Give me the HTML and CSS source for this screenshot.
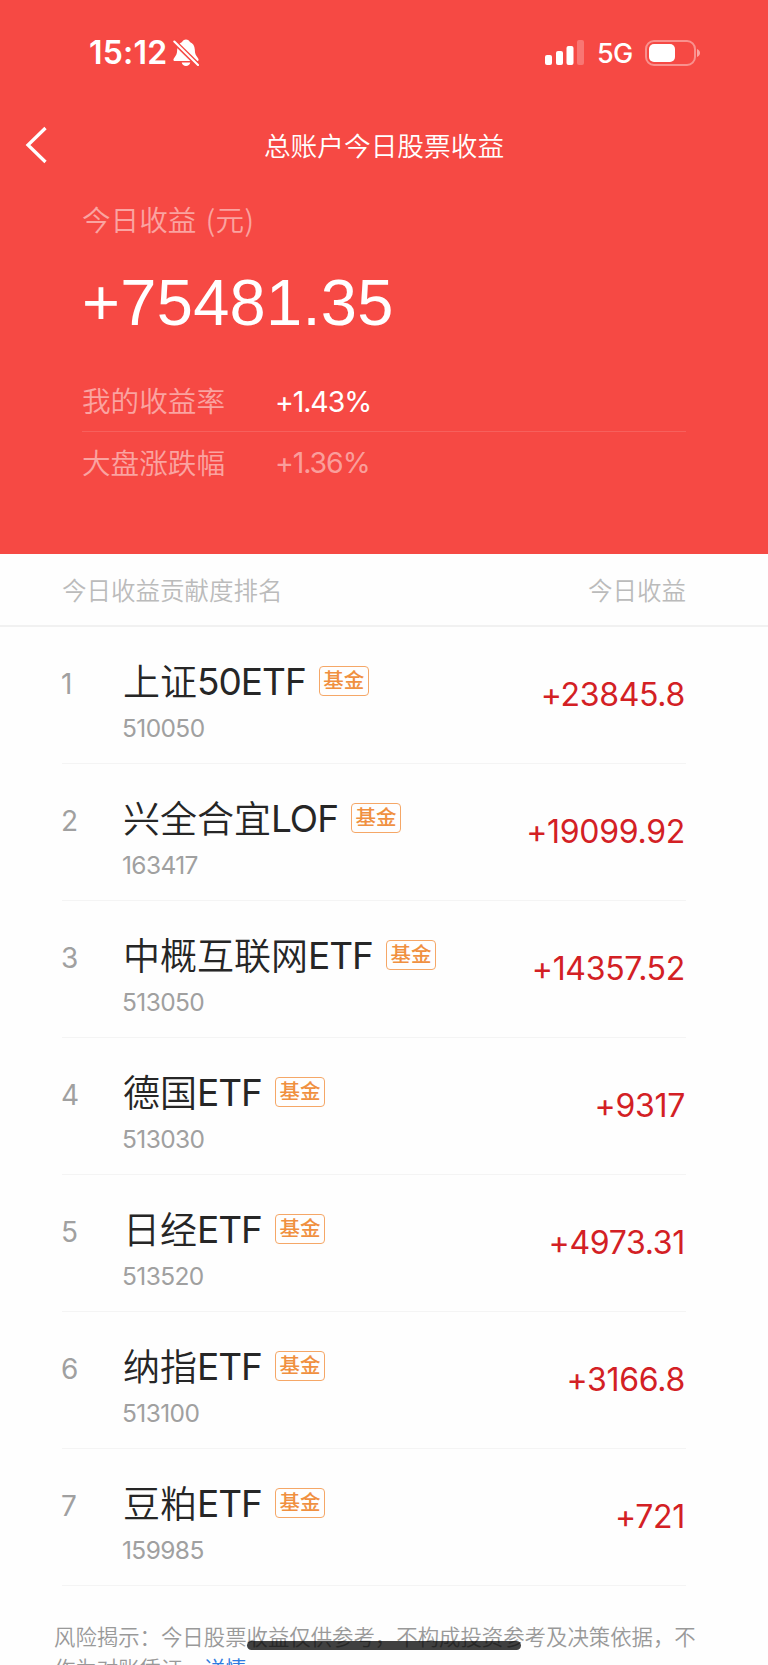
FILE: index.html
```
<!DOCTYPE html>
<html lang="zh-CN">
<head>
<meta charset="UTF-8">
<meta name="viewport" content="width=device-width, initial-scale=1.0">
<title>总账户今日股票收益</title>
<link rel="stylesheet" href="styles.css">
</head>
<body>

<div class="page">
  <header class="top">
    <div class="status-bar">
      <span class="time">15:12</span>
      <svg class="bell" width="26" height="28" viewBox="0 0 26 28">
        <path fill="#fff" d="M13 .6c-1.900 0-3.400 1.100-3.900 2.500C6 4.300 4.400 7 4.200 10.500 4.100 14.500 3.300 16.300 1.500 18.400.8 19.300.4 20 .4 20.700c0 .8.600 1.300 1.500 1.300h22.200c.9 0 1.500-.5 1.500-1.300 0-.7-.4-1.400-1.100-2.300-1.800-2.100-2.600-3.900-2.700-7.900C21.600 7 20 4.300 16.900 3.100 16.400 1.700 14.900.6 13 .6zM8.700 23.600h8.600c-.4 2-2.200 3.400-4.300 3.400s-3.900-1.400-4.300-3.400z"/>
        <path stroke="#f64944" stroke-width="5" d="M0 1.500l25.500 25"/>
        <path stroke="#fff" stroke-width="2.100" stroke-linecap="round" d="M1.300 2.500L25 26"/>
      </svg>
      <div class="status-right">
        <svg class="signal" width="40" height="26" viewBox="0 0 40 26">
          <g fill="#fff">
            <rect x="0" y="15" width="7" height="10" rx="2"/>
            <rect x="11" y="11" width="7" height="14" rx="2"/>
            <rect x="21.500" y="6" width="7" height="19" rx="2"/>
            <rect x="32" y="0" width="7" height="25" rx="2" opacity=".25"/>
          </g>
        </svg>
        <span class="network">5G</span>
        <svg class="battery" width="56" height="26" viewBox="0 0 56 26">
          <rect x="1" y="1" width="49" height="24" rx="8" fill="none" stroke="#fff" stroke-width="2" opacity=".4"/>
          <rect x="4" y="4" width="26" height="18" rx="5" fill="#fff"/>
          <path d="M52 9c4 1.500 4 6.500 0 8z" fill="#fff" opacity=".5"/>
        </svg>
      </div>
    </div>

    <div class="nav">
      <svg class="back" width="24" height="38" viewBox="0 0 24 38">
        <path d="M21.500 2L4 19l17.500 17" fill="none" stroke="#fff" stroke-width="3.300"/>
      </svg>
      <h1>总账户今日股票收益</h1>
    </div>

    <div class="summary">
      <div class="label">今日收益 <span class="unit">(元)</span></div>
      <div class="total">+75481.35</div>
      <div class="rate">
        <span class="label">我的收益率</span>
        <span class="percent">+1.43%</span>
      </div>
      <div class="rate market">
        <span class="label">大盘涨跌幅</span>
        <span class="percent">+1.36%</span>
      </div>
    </div>
  </header>

  <div class="list-head">
    <span>今日收益贡献度排名</span>
    <span>今日收益</span>
  </div>

  <ul class="list">
    <li>
      <span class="rank">1</span>
      <div class="fund">
        <div class="name"><span class="cn">上证</span><b>50ETF</b><span class="tag">基金</span></div>
        <div class="code">510050</div>
      </div>
      <span class="profit">+23845.8</span>
    </li>
    <li>
      <span class="rank">2</span>
      <div class="fund">
        <div class="name"><span class="cn">兴全合宜</span><b>LOF</b><span class="tag">基金</span></div>
        <div class="code">163417</div>
      </div>
      <span class="profit">+19099.92</span>
    </li>
    <li>
      <span class="rank">3</span>
      <div class="fund">
        <div class="name"><span class="cn">中概互联网</span><b>ETF</b><span class="tag">基金</span></div>
        <div class="code">513050</div>
      </div>
      <span class="profit">+14357.52</span>
    </li>
    <li>
      <span class="rank">4</span>
      <div class="fund">
        <div class="name"><span class="cn">德国</span><b>ETF</b><span class="tag">基金</span></div>
        <div class="code">513030</div>
      </div>
      <span class="profit">+9317</span>
    </li>
    <li>
      <span class="rank">5</span>
      <div class="fund">
        <div class="name"><span class="cn">日经</span><b>ETF</b><span class="tag">基金</span></div>
        <div class="code">513520</div>
      </div>
      <span class="profit">+4973.31</span>
    </li>
    <li>
      <span class="rank">6</span>
      <div class="fund">
        <div class="name"><span class="cn">纳指</span><b>ETF</b><span class="tag">基金</span></div>
        <div class="code">513100</div>
      </div>
      <span class="profit">+3166.8</span>
    </li>
    <li>
      <span class="rank">7</span>
      <div class="fund">
        <div class="name"><span class="cn">豆粕</span><b>ETF</b><span class="tag">基金</span></div>
        <div class="code">159985</div>
      </div>
      <span class="profit">+721</span>
    </li>
  </ul>

  <p class="notice">风险揭示：今日股票收益仅供参考，不构成投资参考及决策依据，不作为对账凭证。<a href="#">详情 &gt;</a></p>

  <div class="home-bar"></div>
</div>

</body>
</html>
```
FILE: styles.css
```
* {
  box-sizing: border-box;
}

body {
  margin: 0;
  background-color: #fefefe;
  font-family: Inter, "Noto Sans CJK SC", sans-serif;
  font-weight: 350;
}

.page {
  position: relative;
  width: 768px;
  height: 1665px;
  overflow: hidden;
}

/* red header */
.top {
  height: 554px;
  background-color: #f64944;
  color: #fff;
}

.status-bar {
  display: flex;
  align-items: center;
  height: 105px;
  padding: 0 67px 0 88px;
}

.time {
  width: 85px;
  padding-left: 1px;
  font-size: 32px;
  font-weight: 600;
  letter-spacing: 0.2px;
}

.status-right {
  display: flex;
  align-items: center;
  margin-left: auto;
}

.network {
  width: 48px;
  margin-left: 12px;
  padding-top: 1px;
  font-size: 27px;
  font-weight: 500;
  letter-spacing: -0.8px;
}

.nav {
  display: flex;
  align-items: center;
  height: 80px;
  padding: 0 24px;
}

.nav h1 {
  flex: 1;
  margin: 0 24px 2px 0;
  font-size: 26.7px;
  font-weight: 350;
  text-align: center;
}

.summary {
  padding: 14px 82px 0;
}

.label {
  font-family: "Noto Sans CJK SC", sans-serif;
  font-size: 28.6px;
  line-height: 40px;
  color: rgba(255, 255, 255, 0.5);
}

.unit {
  margin-left: 3px;
  letter-spacing: 0.3px;
}

.total {
  height: 132px;
  font-family: "Liberation Sans", Arial, sans-serif;
  font-size: 65px;
  font-weight: 400;
  line-height: 127px;
  letter-spacing: 0.3px;
}

.rate {
  display: flex;
  align-items: center;
  height: 61px;
  border-bottom: 1px solid rgba(255, 255, 255, 0.13);
}

.rate .label {
  width: 193px;
  padding-bottom: 2px;
}

.percent {
  font-size: 28.5px;
  font-weight: 400;
  letter-spacing: -1.1px;
}

.market {
  border-bottom: none;
}

.market .percent {
  color: rgba(255, 255, 255, 0.48);
}

/* ranking list */
.list-head {
  display: flex;
  justify-content: space-between;
  align-items: center;
  height: 73px;
  padding: 0 82px 0 62px;
  border-bottom: 2px solid #f1f1f1;
  font-size: 24.5px;
  color: #bbb;
}

.list {
  margin: 0;
  padding: 0 82px 0 62px;
  list-style: none;
}

.list li {
  display: flex;
  height: 137px;
  border-bottom: 1px solid #f4f4f4;
}

.rank {
  width: 62px;
  margin-left: -1px;
  font-size: 28px;
  font-weight: 400;
  line-height: 114px;
  color: #a0a0a0;
}

.fund {
  flex: 1;
  padding-top: 28px;
}

.name {
  display: flex;
  align-items: center;
  height: 52px;
  font-size: 37px;
  color: #262626;
}

.cn {
  padding-bottom: 3px;
}

.name b {
  padding-top: 1px;
  font-weight: 400;
  letter-spacing: -1px;
}

.tag {
  width: 50px;
  height: 30px;
  margin-left: 13px;
  border: 1.5px solid #f5a767;
  border-radius: 4px;
  font-size: 20.5px;
  font-weight: 500;
  line-height: 28px;
  text-align: center;
  color: #f09040;
}

.code {
  margin-left: -1px;
  font-size: 24.5px;
  font-weight: 400;
  line-height: 43px;
  letter-spacing: -0.6px;
  color: #a0a0a0;
}

.profit {
  padding-right: 1px;
  font-size: 32px;
  font-weight: 400;
  line-height: 135px;
  letter-spacing: -0.3px;
  color: #d32024;
}

.notice {
  width: 662px;
  margin: 35px 0 0 54px;
  font-size: 21.4px;
  line-height: 32px;
  color: #999;
}

.notice a {
  color: #2f7be0;
  text-decoration: none;
}

/* system home indicator */
.home-bar {
  position: absolute;
  left: 247px;
  bottom: 15px;
  width: 274px;
  height: 9px;
  border-radius: 5px;
  background-color: rgba(0, 0, 0, 0.75);
}
```
